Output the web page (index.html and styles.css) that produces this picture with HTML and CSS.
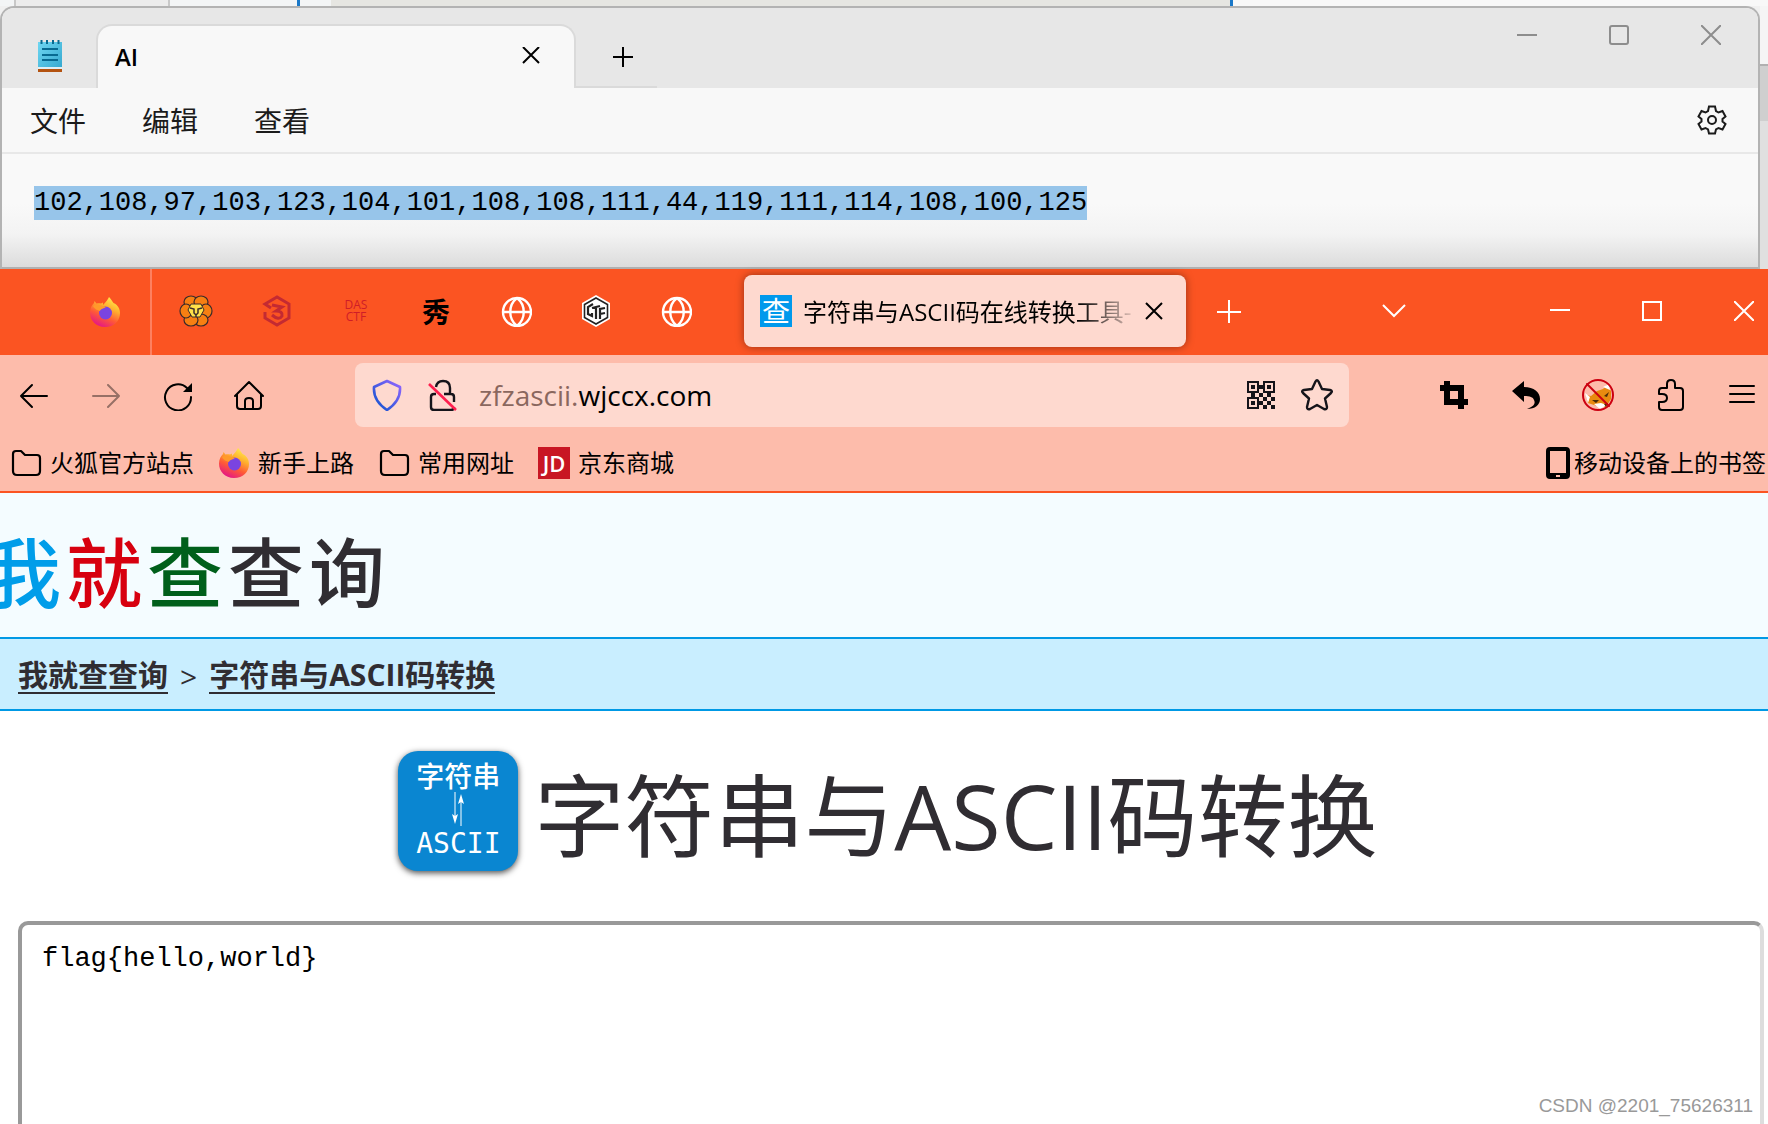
FILE: index.html
```html
<!DOCTYPE html>
<html lang="zh-CN">
<head>
  <meta charset="UTF-8">
  <meta name="viewport" content="width=device-width, initial-scale=1.0">
  <title>字符串与ASCII码在线转换工具</title>
  <link rel="stylesheet" href="styles.css">
</head>
<body>
  <svg width="0" height="0" class="defs" aria-hidden="true">
    <defs>
      <linearGradient id="flame" x1="0.8" y1="0" x2="0.3" y2="1">
        <stop offset="0" stop-color="#fff44f"/>
        <stop offset="0.35" stop-color="#ffb02e"/>
        <stop offset="0.65" stop-color="#ff5a36"/>
        <stop offset="1" stop-color="#e3128b"/>
      </linearGradient>
      <linearGradient id="shieldLine" x1="0" y1="1" x2="1" y2="0">
        <stop offset="0.2" stop-color="#2657d6"/>
        <stop offset="1" stop-color="#9465ff"/>
      </linearGradient>
      <linearGradient id="pad" x1="0" y1="0" x2="1" y2="1">
        <stop offset="0" stop-color="#6fd7f2"/>
        <stop offset="1" stop-color="#35a8cf"/>
      </linearGradient>
    </defs>
    <symbol id="firefox" viewBox="0 0 32 32">
      <path fill="url(#flame)" d="M16 31C7 31 1 24.500 1 16.500C1 12 3 9 5 7L5.500 5L7.500 7.500C9 7 11 7 12 7.500L14 6.500L14 9C17 6 19 3 20 1C22 3 23 5 24.500 7C29 9 31 13 31 17C31 25 25 31 16 31Z"/>
      <circle cx="16.500" cy="17" r="6.500" fill="#7a44e0"/>
      <path fill="#ff9a2a" d="M4 10C7 8 11 9 13 10L17 11C15 13 12 12 11 15C9 14 6 14 4 10Z"/>
    </symbol>
    <symbol id="globe" viewBox="0 0 32 32">
      <g fill="none" stroke="#fff" stroke-width="2.400">
        <circle cx="17" cy="17" r="14"/>
        <path d="M3 17H31M17 3C8 10 8 24 17 31M17 3C26 10 26 24 17 31"/>
      </g>
    </symbol>
    <symbol id="folder" viewBox="0 0 32 32">
      <path fill="none" stroke="#000" stroke-width="2.200" stroke-linejoin="round" d="M6 4H11L15 8H27Q30 8 30 11V24Q30 28 26 28H7Q3 28 3 24V7Q3 4 6 4Z"/>
    </symbol>
  </svg>

  <div class="behind">
    <span class="behind-photo"></span>
    <span class="behind-page"></span>
    <span class="behind-picture"></span>
    <span class="behind-rest"></span>
  </div>

  <div class="notepad-row">
    <section class="notepad">
      <header class="np-title">
        <svg class="np-logo" viewBox="0 0 24 32">
          <path fill="url(#pad)" d="M0 2H24V28H0Z"/>
          <path fill="#dfeff5" d="M0 27H24V29H0Z"/>
          <path fill="#b45310" d="M0 29H24V32H0Z"/>
          <path stroke="#076a91" stroke-width="2" d="M4 9H20M4 15H20M4 20H20M3.500 0V4M9 0V4M15 0V4M20.500 0V4"/>
        </svg>
        <div class="np-tab">
          <span>AI</span>
          <button class="plain" aria-label="关闭标签页"><svg width="18" height="18" viewBox="0 0 18 18"><path d="M1 0L17 16M17 0L1 16"/></svg></button>
        </div>
        <button class="plain np-add" aria-label="新标签页"><svg width="20" height="20" viewBox="0 0 20 20"><path d="M10 0V20M0 10H20"/></svg></button>
        <div class="np-controls">
          <button class="plain" aria-label="最小化"><svg width="20" height="20" viewBox="0 0 20 20"><path d="M0 10H20"/></svg></button>
          <button class="plain" aria-label="最大化"><svg width="20" height="20" viewBox="0 0 20 20"><rect x="1" y="1" width="18" height="18" rx="2"/></svg></button>
          <button class="plain" aria-label="关闭"><svg width="20" height="20" viewBox="0 0 20 20"><path d="M0 0L20 20M20 0L0 20"/></svg></button>
        </div>
      </header>
      <nav class="np-menu">
        <button>文件</button>
        <button>编辑</button>
        <button>查看</button>
        <button class="plain np-gear" aria-label="设置">
          <svg width="30" height="30" viewBox="0 0 30 30">
            <path d="M12 1.500H18L19 6L21.500 7.500L25.500 6L28.500 11.500L25.500 14V16.500L28.500 19L25.500 24.500L21.500 23L19 24.500L18 28.500H12L11 24.500L8.500 23L4.500 24.500L1.500 19L4.500 16.500V14L1.500 11.500L4.500 6L8.500 7.500L11 6Z"/>
            <circle cx="15" cy="15" r="4"/>
          </svg>
        </button>
      </nav>
      <div class="np-text"><mark>102,108,97,103,123,104,101,108,108,111,44,119,111,114,108,100,125</mark></div>
    </section>
    <div class="behind-side"></div>
  </div>

  <header class="tabs">
    <button class="pinned first" aria-label="Firefox"><svg width="32" height="32"><use href="#firefox"/></svg></button>
    <button class="pinned" aria-label="狮子">
      <svg width="34" height="32" viewBox="0 0 34 32">
        <g fill="#f77f12" stroke="#3b2b2b" stroke-width="1.200">
          <ellipse cx="12" cy="7" rx="7" ry="6"/>
          <ellipse cx="22" cy="7" rx="7" ry="6"/>
          <ellipse cx="27" cy="16" rx="6" ry="7"/>
          <ellipse cx="22" cy="25" rx="7" ry="6"/>
          <ellipse cx="12" cy="25" rx="7" ry="6"/>
          <ellipse cx="7" cy="16" rx="6" ry="7"/>
        </g>
        <path fill="#ffe04a" stroke="#3b2b2b" d="M12 9H22L25 15L21 22H13L9 15Z"/>
        <path fill="none" stroke="#3b2b2b" stroke-width="1.500" d="M11 13L15 14V18L17 20L19 18V14L23 13M17 20V22"/>
      </svg>
    </button>
    <button class="pinned" aria-label="3">
      <svg width="32" height="32" viewBox="0 0 32 32">
        <g fill="none" stroke="#c42a32" stroke-width="3">
          <path d="M11 13L5 9L17 2L29 9V23L17 30L5 23V17"/>
          <path d="M12 10L22 12L16 16Q23 16 22 21Q19 26 12 20"/>
        </g>
      </svg>
    </button>
    <button class="pinned das" aria-label="DASCTF"><span>DAS</span><span>CTF</span></button>
    <button class="pinned xiu">秀</button>
    <button class="pinned" aria-label="网站"><svg width="32" height="32"><use href="#globe"/></svg></button>
    <button class="pinned" aria-label="CTF">
      <svg width="32" height="32" viewBox="0 0 32 32">
        <path fill="#fff" d="M16 0L30 8V24L16 32L2 24V8Z"/>
        <path fill="none" stroke="#222" stroke-width="1.600" d="M16 3L27.500 9.500V22.500L16 29L4.500 22.500V9.500Z"/>
        <path fill="none" stroke="#222" stroke-width="2.200" d="M13 9L8 12V19L12 21V18M12 13L20 11M16 12V24M20 24V14L25 13M20 19L25 18"/>
      </svg>
    </button>
    <button class="pinned" aria-label="网站"><svg width="32" height="32"><use href="#globe"/></svg></button>
    <div class="tab">
      <span class="favicon">查</span>
      <span class="tab-name">字符串与ASCII码在线转换工具-</span>
      <button class="plain" aria-label="关闭标签页"><svg width="18" height="18" viewBox="0 0 18 18"><path d="M1 1L17 17M17 1L1 17"/></svg></button>
    </div>
    <button class="plain add" aria-label="新标签页"><svg width="24" height="24" viewBox="0 0 24 24"><path d="M12 1V24M0 13H24"/></svg></button>
    <div class="window-controls">
      <button class="plain list" aria-label="列出所有标签页"><svg width="24" height="24" viewBox="0 0 24 24"><path d="M1 6L12 17L23 6"/></svg></button>
      <button class="plain" aria-label="最小化"><svg width="20" height="20" viewBox="0 0 20 20"><path d="M0 9H20"/></svg></button>
      <button class="plain" aria-label="最大化"><svg width="20" height="20" viewBox="0 0 20 20"><path d="M1 1H19V19H1Z"/></svg></button>
      <button class="plain" aria-label="关闭"><svg width="20" height="20" viewBox="0 0 20 20"><path d="M0 0L20 20M20 0L0 20"/></svg></button>
    </div>
  </header>

  <nav class="toolbar">
    <div class="nav-buttons">
      <button class="plain" aria-label="后退"><svg width="32" height="32" viewBox="0 0 32 32"><path d="M29 17H3M14 6L3 17L14 28"/></svg></button>
      <button class="plain" aria-label="前进" disabled><svg width="32" height="32" viewBox="0 0 32 32"><path d="M3 17H29M18 6L29 17L18 28"/></svg></button>
      <button class="plain" aria-label="刷新"><svg width="32" height="32" viewBox="0 0 32 32"><path d="M29 18A13 13 0 1 1 25 9"/><path class="fill" d="M30 4V13H21Z"/></svg></button>
      <button class="plain" aria-label="主页"><svg width="32" height="32" viewBox="0 0 32 32"><path d="M1 17L15 3L29 17M3 15V27Q3 30 6 30H24Q27 30 27 27V15M11 30V22Q11 19 15 19Q19 19 19 22V30"/></svg></button>
    </div>
    <div class="urlbar">
      <svg width="32" height="32" viewBox="0 0 32 32"><path fill="none" stroke="url(#shieldLine)" stroke-width="2.600" stroke-linejoin="round" d="M16 2L29 8Q30 22 16 31Q2 22 3 8Z"/></svg>
      <svg class="lock" width="32" height="32" viewBox="0 0 32 32">
        <path fill="none" stroke="#15141a" stroke-width="2.400" d="M9 8Q10 2 16 2Q23 2 23 9V15M9 15H7Q4 15 4 18V28Q4 31 7 31H24Q27 31 27 28M17 15H24Q27 15 27 18V23"/>
        <path stroke="#ff1f4e" stroke-width="2.600" d="M2 5L29 31"/>
      </svg>
      <span class="url"><i>zfzascii.</i>wjccx.com</span>
      <svg class="qr" width="28" height="28" viewBox="0 0 28 28">
        <path fill="none" stroke="#15141a" stroke-width="2" d="M1 1H11V11H1ZM17 1H27V11H17ZM1 17H11V27H1Z"/>
        <path fill="#15141a" d="M4 4H8V8H4ZM20 4H24V8H20ZM4 20H8V24H4ZM12 4H16V8H12ZM4 12H8V16H4ZM12 12H16V16H12ZM20 12H24V16H20ZM16 16H20V20H16ZM24 16H28V20H24ZM12 20H16V24H12ZM20 20H24V24H20ZM16 24H20V28H16ZM24 24H28V28H24Z"/>
      </svg>
      <svg width="32" height="32" viewBox="0 0 32 32"><path fill="none" stroke="#15141a" stroke-width="2.400" stroke-linejoin="round" d="M14.500 2.500Q16 0 17.500 2.500L21 10L29 11Q32 12 30 14L24 19.500L26 28Q26 31 23 30L16 26L9 30Q6 31 6 28L8 19.500L2 14Q0 12 3 11L11 10Z"/></svg>
    </div>
    <div class="extensions">
      <button class="plain" aria-label="截图"><svg width="32" height="32" viewBox="0 0 32 32"><path class="fill" d="M6 2H12V6H26V20H30V26H26V30H20V26H6V12H2V6H6ZM12 12V20H20V12Z" fill-rule="evenodd"/></svg></button>
      <button class="plain" aria-label="撤销"><svg width="32" height="32" viewBox="0 0 32 32"><path class="fill" d="M2 12L14 2V8C24 8 30 13 30 20C30 26 25 30 17 30C23 28 26 25 24 21C23 18 20 17 14 17V23Z"/></svg></button>
      <button class="plain" aria-label="FoxyProxy">
        <svg width="32" height="32" viewBox="0 0 32 32">
          <g stroke="none">
            <path fill="#e88a10" d="M4 16L9 17L15 12L21 10L25 6L29 12L29 20L24 28L15 27L6 24Z"/>
            <path fill="#fff" d="M3 14L8 18L6 24ZM21 8L27 5L28 11ZM12 25L19 24L25 26L18 30Z"/>
            <path fill="#4a2c08" d="M10 21L17 21L14 24ZM22 17L27 13L25 18ZM22 25L26 24L24 28Z"/>
          </g>
          <path stroke="#cc0010" d="M5 5L27 27"/>
          <circle stroke="#cc0010" cx="16" cy="16" r="15"/>
        </svg>
      </button>
      <button class="plain" aria-label="扩展"><svg width="32" height="32" viewBox="0 0 32 32"><path d="M5 15V12Q5 9 8 9H13V5Q13 1 17 1Q21 1 21 5V9H26Q29 9 29 12V28Q29 31 26 31H8Q5 31 5 28V23H8Q13 23 13 19Q13 15 8 15Z"/></svg></button>
      <button class="plain" aria-label="菜单"><svg width="32" height="32" viewBox="0 0 32 32"><path d="M4 7H28M4 15H28M4 23H28"/></svg></button>
    </div>
  </nav>

  <nav class="bookmarks">
    <a href="#"><svg width="32" height="32"><use href="#folder"/></svg>火狐官方站点</a>
    <a href="#"><svg width="32" height="32"><use href="#firefox"/></svg>新手上路</a>
    <a href="#"><svg width="32" height="32"><use href="#folder"/></svg>常用网址</a>
    <a href="#"><span class="jd">JD</span>京东商城</a>
    <a href="#" class="mobile"><svg width="24" height="32" viewBox="0 0 24 32"><path fill-rule="evenodd" d="M4 0H20Q24 0 24 4V28Q24 32 20 32H4Q0 32 0 28V4Q0 0 4 0ZM4 4V26H20V4ZM10 28V30H14V28Z"/></svg>移动设备上的书签</a>
  </nav>

  <main>
    <div class="site-logo">
      <span class="blue">我</span><span class="red">就</span><span class="green">查</span><span>查</span><span>询</span>
    </div>
    <div class="crumbs"><a href="#">我就查查询</a><span>&gt;</span><a href="#">字符串与ASCII码转换</a></div>
    <div class="heading">
      <div class="app-icon">
        <span>字符串</span>
        <svg width="14" height="34" viewBox="0 0 14 34"><path stroke="#fff" d="M4 0V26M10 8V34"/><path fill="#fff" d="M1 22L4 24L7 22L4 32ZM7 12L10 2L13 12L10 10Z"/></svg>
        <span class="app-ascii">ASCII</span>
      </div>
      <h1>字符串与ASCII码转换</h1>
    </div>
    <div class="editor">
      <textarea aria-label="字符串" spellcheck="false">flag{hello,world}</textarea>
    </div>
  </main>
  <div class="watermark">CSDN @2201_75626311</div>
</body>
</html>
```
FILE: styles.css
```css
* {
  box-sizing: border-box;
}
body {
  margin: 0;
  height: 100vh;
  display: flex;
  flex-direction: column;
  overflow: hidden;
  position: relative;
  background: #fff;
  color: #000;
  font-family: "Open Sans", "Noto Sans CJK SC", sans-serif;
  font-size: 24px;
}
button {
  font: inherit;
  color: inherit;
  background: none;
  border: 0;
  padding: 0;
}
svg {
  display: block;
  flex: none;
}
.defs {
  position: absolute;
}
.plain {
  display: flex;
  fill: none;
  stroke: currentColor;
  stroke-width: 2px;
}

/* windows behind */
.behind {
  display: flex;
  height: 6px;
  flex: none;
  background: #f3f5f6;
}
.behind-photo {
  width: 156px;
  margin-left: 14px;
  background: #ececec;
  border-left: 2px solid #c8c8c8;
  border-right: 2px solid #c8c8c8;
}
.behind-page {
  width: 130px;
  border-right: 3px solid #1a78c8;
}
.behind-picture {
  flex: 1;
  margin-left: 31px;
  background: #e6e6e2;
}
.behind-rest {
  width: 538px;
  border-left: 3px solid #1a78c8;
  background: #f8f8f8;
}
.notepad-row {
  display: flex;
  flex: none;
  background: #f0f0f0;
}
.behind-side {
  width: 8px;
  background: linear-gradient(#f5f5f5 58px, #b0b0b0 58px, #b0b0b0 60px, #cfcfcf 60px, #cfcfcf 115px, #e0e0e0 115px);
}

/* notepad */
.notepad {
  flex: 1;
  border: 2px solid #b3b3b3;
  border-bottom: 0;
  border-radius: 14px 14px 0 0;
  background: #f9f9f9;
  overflow: hidden;
}
.np-title {
  display: flex;
  height: 80px;
  background: #e7e7e7;
}
.np-logo {
  width: 24px;
  height: 32px;
  margin: 32px 34px 0 36px;
}
.np-tab {
  display: flex;
  align-items: center;
  justify-content: space-between;
  width: 480px;
  height: 64px;
  margin-top: 16px;
  padding: 0 34px 2px 17px;
  background: #f8f8f8;
  border: 2px solid #dadada;
  border-bottom: 0;
  border-radius: 16px 16px 0 0;
  font-weight: 600;
}
.np-add {
  width: 81px;
  padding: 39px 0 0 37px;
  border-bottom: 2px solid #dadada;
}
.np-controls {
  display: flex;
  gap: 72px;
  margin: 17px 37px 0 auto;
  color: #8d8d8d;
}
.np-controls .plain {
  height: 20px;
}
.np-menu {
  display: flex;
  align-items: center;
  gap: 56px;
  height: 66px;
  padding: 0 31px 0 28px;
  background: #f8f8f8;
  border-bottom: 2px solid #e8e8e8;
  font-size: 28px;
  color: #1b1b1b;
}
.np-gear {
  margin-left: auto;
}
.np-text {
  height: 115px;
  padding: 32px 32px 0;
  background: linear-gradient(#f9f9f9 50px, #f3f3f3 80px, #dcdcdc);
  border-bottom: 2px solid #b0b0b0;
  font-family: "Liberation Mono", monospace;
  font-size: 27px;
  line-height: 34px;
}
.np-text mark {
  display: inline-block;
  background: #97c5ea;
  color: #000;
}

/* browser tabs */
.tabs {
  display: flex;
  align-items: center;
  flex: none;
  height: 86px;
  padding-bottom: 2px;
  background: #fb5422;
  color: #fff;
}
.pinned {
  display: flex;
  align-items: center;
  justify-content: center;
  width: 80px;
  height: 84px;
}
.pinned.first {
  width: 152px;
  height: 86px;
  padding-left: 60px;
  margin: 0 4px -2px 0;
  border-right: 2px solid #fd8060;
}
.pinned.das {
  flex-direction: column;
  font-size: 12px;
  line-height: 12px;
  color: #cf1d28;
}
.pinned.xiu {
  font-family: "Noto Sans CJK SC", sans-serif;
  font-size: 28px;
  font-weight: bold;
  line-height: 32px;
  color: #000;
}
.tab {
  display: flex;
  align-items: center;
  width: 442px;
  height: 72px;
  margin-left: 28px;
  padding: 0 23px 0 16px;
  background: #fed9cf;
  border-radius: 8px;
  box-shadow: 0 0 8px rgba(0, 0, 0, 0.4);
  color: #000;
}
.favicon {
  width: 32px;
  height: 32px;
  margin-right: 11px;
  background: #0099ec;
  color: #fff;
  font-size: 28px;
  line-height: 32px;
  text-align: center;
}
.tab-name {
  flex: 1;
  overflow: hidden;
  white-space: nowrap;
  margin-right: 6px;
  padding-bottom: 2px;
  font-size: 24px;
  mask-image: linear-gradient(to right, #000 82%, transparent);
}
.add {
  margin-left: 31px;
}
.window-controls {
  display: flex;
  align-items: center;
  gap: 72px;
  margin: 0 14px 0 auto;
}
.window-controls .list {
  margin-right: 72px;
}

/* toolbar */
.toolbar {
  display: flex;
  align-items: center;
  flex: none;
  height: 80px;
  padding: 0 10px 0 18px;
  background: #fdbcab;
}
.nav-buttons, .extensions {
  display: flex;
  gap: 40px;
}
.toolbar .plain {
  stroke-linejoin: round;
  stroke-linecap: round;
}
.nav-buttons .plain {
  stroke-width: 2px;
}
.toolbar .fill {
  fill: #000;
  stroke: none;
}
.toolbar .plain:disabled {
  color: #000;
  opacity: 0.4;
}
.urlbar {
  display: flex;
  align-items: center;
  flex: 1;
  height: 64px;
  margin: 0 89px;
  padding: 0 16px;
  background: #fed9cf;
  border-radius: 8px;
}
.lock {
  margin: 0 20px 0 24px;
}
.url {
  font-size: 28px;
}
.url i {
  font-style: normal;
  color: #8a675e;
}
.qr {
  margin: 0 26px 0 auto;
}

/* bookmarks */
.bookmarks {
  display: flex;
  align-items: center;
  gap: 24px;
  flex: none;
  height: 58px;
  padding: 0 2px 0 10px;
  background: #fdbcab;
  border-bottom: 2px solid #fb5422;
}
.bookmarks a {
  display: flex;
  align-items: center;
  gap: 8px;
  color: #000;
  line-height: 28px;
  text-decoration: none;
  white-space: nowrap;
}
.bookmarks .mobile {
  gap: 4px;
  margin-left: auto;
}
.jd {
  width: 32px;
  height: 32px;
  background: #c81623;
  color: #fff;
  font-size: 22px;
  font-weight: 600;
  line-height: 32px;
  text-align: center;
}

/* page */
main {
  flex: none;
  color: #302d32;
}
.site-logo {
  display: flex;
  gap: 5px;
  height: 144px;
  margin-left: -15px;
  background: #f4fcff;
  font-family: "Noto Sans CJK SC", sans-serif;
  font-size: 76px;
  font-weight: 500;
  line-height: 152px;
}
.blue {
  color: #009de9;
}
.red {
  color: #d7000f;
}
.green {
  color: #005f1b;
}
.crumbs {
  display: flex;
  align-items: center;
  gap: 12px;
  height: 74px;
  padding: 4px 18px 0;
  background: #c9eeff;
  border: solid #0099e5;
  border-width: 2px 0;
  font-size: 30px;
}
.crumbs a {
  border-bottom: 2px solid #302d32;
  color: inherit;
  font-weight: bold;
  line-height: 34px;
  text-decoration: none;
}
.heading {
  display: flex;
  align-items: center;
  justify-content: center;
  gap: 16px;
  height: 200px;
  padding-left: 8px;
}
.app-icon {
  display: flex;
  flex-direction: column;
  align-items: center;
  width: 120px;
  height: 120px;
  padding-top: 9px;
  background: #0a86d1;
  border-radius: 20px;
  box-shadow: 0 2px 6px rgba(0, 0, 0, 0.7);
  color: #fff;
  font-size: 28px;
  font-weight: 500;
  line-height: 32px;
}
.app-ascii {
  padding-top: 2px;
  font-family: "DejaVu Sans Mono", monospace;
}
h1 {
  margin: 0;
  padding-top: 8px;
  font-size: 90px;
  font-weight: 400;
  line-height: 120px;
}
.editor {
  padding: 10px 4px 0 18px;
}
textarea {
  display: block;
  width: 100%;
  height: 400px;
  padding: 18px 20px;
  border: 4px solid #999;
  border-right-color: #ddd;
  border-radius: 10px;
  resize: none;
  outline: none;
  color: #000;
  font-family: "Liberation Mono", monospace;
  font-size: 27px;
  line-height: 32px;
}
.watermark {
  position: absolute;
  right: 15px;
  bottom: 6px;
  color: #999;
  font-family: "Liberation Sans", sans-serif;
  font-size: 19px;
  line-height: 24px;
}
```
